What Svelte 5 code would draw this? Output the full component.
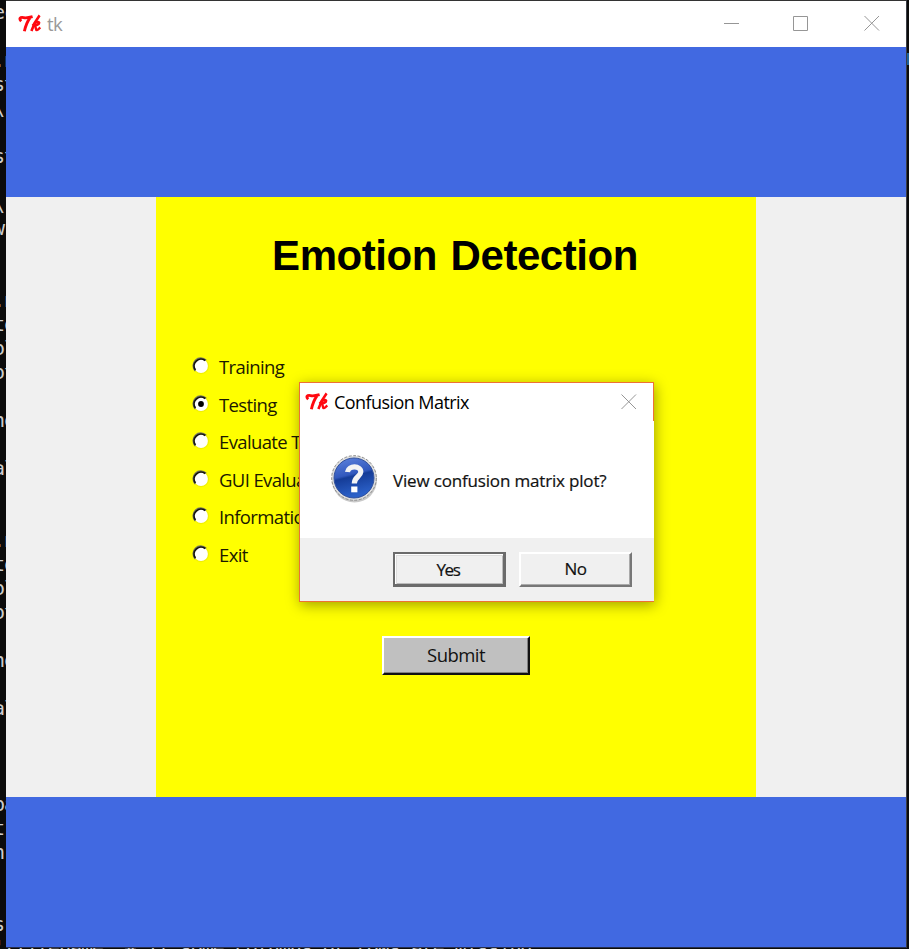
<script>
  const consoleLines = {
    0: 'ec', 2: '.n', 3: 'st', 4: "\\'", 6: 'st', 8: "\\'", 9: 'w', 12: '.n', 13: 'to', 14: 'ol', 15: 'ot',
    17: 'no', 19: 'al', 22: '.n', 23: 'to', 24: 'ol', 25: 'ot', 27: 'no', 29: 'al', 33: 'pa', 34: 't',
    35: 'n', 38: 's', 39: "'(filename, # if some columns or rows are missing"
  };
  const rows = Array.from({ length: 40 }, (_, i) => consoleLines[i] ?? '');
  const options = ['Training', 'Testing', 'Evaluate Test', 'GUI Evaluation', 'Information', 'Exit'];
  let selected = $state('Testing');
</script>

{#snippet tkIcon()}
  <svg class="tk" width="24" height="20" viewBox="0 0 24 20" fill="none" stroke="#ff0810" stroke-linejoin="round">
    <path d="M3.2 7.2C.6 4.6 2.2 3 5.5 3.6C8.5 4.2 11 3.6 14.6 2.6" stroke-width="2.8" />
    <path d="M12 3.8C9.6 7 7.6 11.5 6.4 17.2" stroke-width="2.9" />
    <path d="M21.6 1.4C18.3 5.5 15.4 10.8 13.4 17" stroke-width="2.5" />
    <path d="M14.7 11.6C16.5 8.5 20.6 7 21.2 8.6C21.4 10.4 18.5 11.6 15.9 11.8C18.7 11.6 17 16.2 18.9 16C20.2 15.8 21 14.7 22.2 13.4" stroke-width="2.4" />
  </svg>
{/snippet}

<div class="screen">
  <div class="console">
    {#each rows as row}<div class="row">{row}</div>{/each}
  </div>
  <div class="edge"></div>

  <main class="window">
    <header class="titlebar">
      {@render tkIcon()}
      <span class="title">tk</span>
      <div class="controls">
        <svg width="16" height="16" viewBox="0 0 16 16"><path d="M0 8.5H15" /></svg>
        <svg width="16" height="16" viewBox="0 0 16 16"><path d="M-.5 1.5H13.5V15.5H-.5Z" /></svg>
        <svg width="16" height="16" viewBox="0 0 16 16"><path d="M.5 1L15 15.5M15 1L.5 15.5" /></svg>
      </div>
    </header>
    <div class="band"></div>
    <div class="middle">
      <section class="panel">
        <h1>Emotion Detection</h1>
        <div class="options">
          {#each options as option}
            <button class="option" onclick={() => (selected = option)}>
              <svg width="18" height="18" viewBox="0 0 18 18">
                <circle cx="9" cy="9" r="8.2" fill="#f1f100" />
                <circle cx="9" cy="9" r="6.9" fill="#fff" />
                <path d="M3.3 14A7.6 7.6 0 0 1 14.2 3.3" fill="none" stroke="#77775f" stroke-width="1.4" />
                <path d="M3.4 13A6.9 6.9 0 0 1 13.2 3.5" fill="none" stroke="#151510" stroke-width="1.8" />
                {#if selected === option}<circle cx="9" cy="9" r="2.9" fill="#000" />{/if}
              </svg>
              <span>{option}</span>
            </button>
          {/each}
        </div>
        <button class="submit"><span>Submit</span></button>
      </section>
    </div>
    <div class="band"></div>
  </main>

  <div class="dialog" role="dialog" aria-label="Confusion Matrix">
    <header class="dialog-title">
      {@render tkIcon()}
      <span class="title">Confusion Matrix</span>
      <svg class="close" width="16" height="16" viewBox="0 0 16 16"><path d="M.5 .5L15 15M15 .5L.5 15" /></svg>
    </header>
    <div class="message">
      <svg width="48" height="50" viewBox="0 0 48 50">
        <defs>
          <linearGradient id="ball" x1="0" y1="0" x2=".25" y2="1">
            <stop offset="0" stop-color="#6085df" />
            <stop offset=".48" stop-color="#3158bd" />
            <stop offset=".54" stop-color="#153c97" />
            <stop offset="1" stop-color="#2b60c8" />
          </linearGradient>
        </defs>
        <ellipse cx="24.5" cy="26" rx="22.5" ry="22.5" fill="#c9c9c9" />
        <circle cx="24" cy="24" r="22.3" fill="#dedede" stroke="#8c8c8c" stroke-width="1" stroke-dasharray="3 1.5" />
        <circle cx="24" cy="24" r="20" fill="url(#ball)" stroke="#33529d" stroke-width="1" />
        <path d="M17.5 18C18.5 11 31 11.5 30.8 18C30.6 22.5 24.3 22.8 24.3 29.5" fill="none" stroke="#f4f4f4" stroke-width="5.2" />
        <rect x="21.2" y="32.5" width="6.2" height="5.8" fill="#fff" />
      </svg>
      <span>View confusion matrix plot?</span>
    </div>
    <footer>
      <button class="yes"><span>Yes</span></button>
      <button class="no"><span>No</span></button>
    </footer>
  </div>
</div>

<style>
  :global(body) { margin: 0; background: #0b0b0b; }
  .screen { position: relative; width: 909px; height: 949px; overflow: hidden; background: #0b0b0b; font-family: "Open Sans", sans-serif; }
  .console { position: absolute; left: -7px; top: 0; color: #ccc; font: 20px/24px "DejaVu Sans Mono", monospace; letter-spacing: -1.05px; white-space: pre; }
  .row { height: 24px; }
  .row:last-child { margin-top: -1px; }
  .edge { position: absolute; left: 907px; top: 53px; width: 2px; height: 12px; background: #1d5f98; }
  .window { position: absolute; left: 6px; top: 0; width: 900px; height: 946px; border-top: 1px solid #333; border-right: 1px solid #3b3d46; border-bottom: 1px solid #262e4b; }
  .titlebar { height: 46px; display: flex; align-items: center; background: #fff; }
  .titlebar .tk { margin: 0 0 0 12px; }
  .titlebar .title { margin-left: 5px; color: #999; font-size: 18.5px; letter-spacing: -.6px; line-height: 24px; padding-bottom: 1px; }
  .controls { display: flex; gap: 54px; margin-left: auto; padding-right: 26px; margin-top: -3px; }
  .controls svg, .close { fill: none; stroke: #969696; stroke-width: 1; overflow: visible; }
  .band { height: 150px; background: #4169e1; }
  .middle { height: 600px; background: #f0f0f0; display: flex; justify-content: center; }
  .panel { width: 600px; height: 600px; background: #ff0; display: flex; flex-direction: column; align-items: center; }
  h1 { margin: 33px 2px 0 0; height: 52px; font: bold 42px/52px "Liberation Sans", sans-serif; color: #000; letter-spacing: -.45px; word-spacing: 2.5px; white-space: nowrap; }
  button { font-family: inherit; padding: 0; color: #111; box-sizing: border-box; }
  .options { align-self: flex-start; margin: 66px 0 0 36px; }
  .option { display: flex; align-items: center; gap: 9px; height: 37.5px; border: 0; background: none; font-size: 18.5px; letter-spacing: -.63px; white-space: nowrap; color: #1b1900; }
  .option svg { margin-top: -1px; }
  .submit { margin-top: 63px; width: 148px; height: 39px; background: #c0c0c0; font-size: 18.5px; letter-spacing: -.55px; border: 2px solid; border-color: #fff #111 #111 #fff; box-shadow: inset -1px -1px #808080; }
  .submit span { position: relative; top: -1px; }
  .dialog { position: absolute; left: 299px; top: 382px; width: 355px; height: 220px; box-sizing: border-box; border: 1px solid #ed7135; border-right: 0; background: #fff; box-shadow: 1px 3px 13px rgba(0, 0, 0, .38); display: flex; flex-direction: column; }
  .dialog-title { height: 38px; display: flex; align-items: center; border-right: 1px solid #ed7135; box-sizing: border-box; }
  .dialog-title .tk { margin-left: 5px; }
  .dialog-title .title { margin-left: 5px; font-size: 18px; letter-spacing: -.56px; color: #000; white-space: nowrap; padding-bottom: 1px; }
  .close { margin: 0 16px 0 auto; }
  .message { flex: 1; display: flex; align-items: center; padding-left: 30px; gap: 15px; font-size: 17px; letter-spacing: -.17px; color: #111; -webkit-text-stroke: .2px #111; }
  .message svg { position: relative; top: -1px; }
  .message span { white-space: nowrap; padding-top: 1px; }
  footer { height: 63px; background: #f0f0f0; display: flex; justify-content: flex-end; gap: 13px; padding: 14px 22px 0 0; box-sizing: border-box; }
  footer button { width: 113px; height: 35px; background: #f0f0f0; font-size: 17px; letter-spacing: -.4px; border: 2px solid; border-color: #fff #777 #777 #fff; box-shadow: inset -1px -1px #aaa; -webkit-text-stroke: .2px #111; }
  footer .no span { position: relative; top: -1px; }
  footer .yes { border: 2px solid #6b6b6b; border-width: 2px 3px 3px 2px; box-shadow: inset 1px 1px #fff, inset 2px 2px #ddd, inset -1px -1px #bbb; letter-spacing: -1.4px; padding-right: 2px; }
</style>
